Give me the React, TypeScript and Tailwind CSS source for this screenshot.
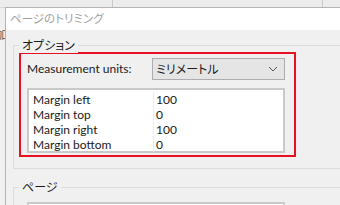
const rows = [
  {label: "Margin left", value: "100"},
  {label: "Margin top", value: "0"},
  {label: "Margin right", value: "100"},
  {label: "Margin bottom", value: "0"},
]

const jp = "[font-family:'Noto_Sans_CJK_JP',sans-serif] [font-feature-settings:'palt']"

export default function App() {
  return (
    <div className="relative h-[205px] w-[340px] overflow-hidden bg-[#f0f0f0] text-[12px] text-[#1a1a1a] [font-family:Lato,'Noto_Sans_CJK_JP',sans-serif]">
      {/* app behind the dialog */}
      <div className="flex h-[8px] border-b border-[#d9d9d9] bg-[#ececec]">
        <div className="w-[113px] border-r border-[#c8c8c8]"/>
        <div className="w-[210px] border-r border-[#c8c8c8]"/>
      </div>
      <div className={`absolute left-[-4px] top-[26px] text-[11px] text-[#555] ${jp}`}>加</div>

      {/* dialog */}
      <div className="absolute left-[5px] top-[7px] h-[220px] w-[360px] border-l border-t border-[#b4b4b4] bg-[#f0f0f0]">
        <div className={`flex h-[22px] items-center bg-white pl-[4px] text-[11.5px] text-[#a0a0a0] ${jp}`}>
          ページのトリミング
        </div>

        <div className="pl-[7px] pt-[15px]">
          {/* group: options */}
          <div className="relative h-[124px] border border-[#dcdcdc] pl-[5px] pt-[6px]">
            <span className={`absolute left-[5px] top-[-9px] bg-[#f0f0f0] px-[3px] text-[12px] leading-[16px] ${jp}`}>オプション</span>

            <div className="h-[105px] w-[277px] border-2 border-[#e81123] pl-[6px] pr-[9px] pt-[4px]">
              <div className="flex h-[22px] items-center justify-between">
                <span>Measurement units:</span>
                <div className="flex h-[22px] w-[133px] items-center justify-between border border-[#adadad] bg-[#e5e5e5] pl-[3px] pr-[6px]">
                  <span className={jp}>ミリメートル</span>
                  <svg width="10" height="6" viewBox="0 0 10 6" fill="none" stroke="#555" strokeWidth="1">
                    <path d="M1 1l4 4 4-4"/>
                  </svg>
                </div>
              </div>

              <div className="mt-[8px] h-[65px] w-[258px] border-2 border-[#c9c9c9] bg-white pt-[2px]">
                {rows.map(r => (
                  <div key={r.label} className="flex h-[15px] items-center leading-[15px]">
                    <span className="h-full w-[125px] border-r border-[#eeeeee] pl-[4px]">{r.label}</span>
                    <span className="pl-[2px]">{r.value}</span>
                  </div>
                ))}
              </div>
            </div>
          </div>

          {/* group: page */}
          <div className="relative mt-[18px] h-[60px] border border-[#dcdcdc] pl-[13px] pt-[14px]">
            <span className={`absolute left-[5px] top-[-9px] bg-[#f0f0f0] px-[3px] text-[12px] leading-[16px] ${jp}`}>ページ</span>
            <div className="h-[30px] w-[258px] border-2 border-[#c9c9c9] bg-white"/>
          </div>
        </div>
      </div>
    </div>
  )
}
